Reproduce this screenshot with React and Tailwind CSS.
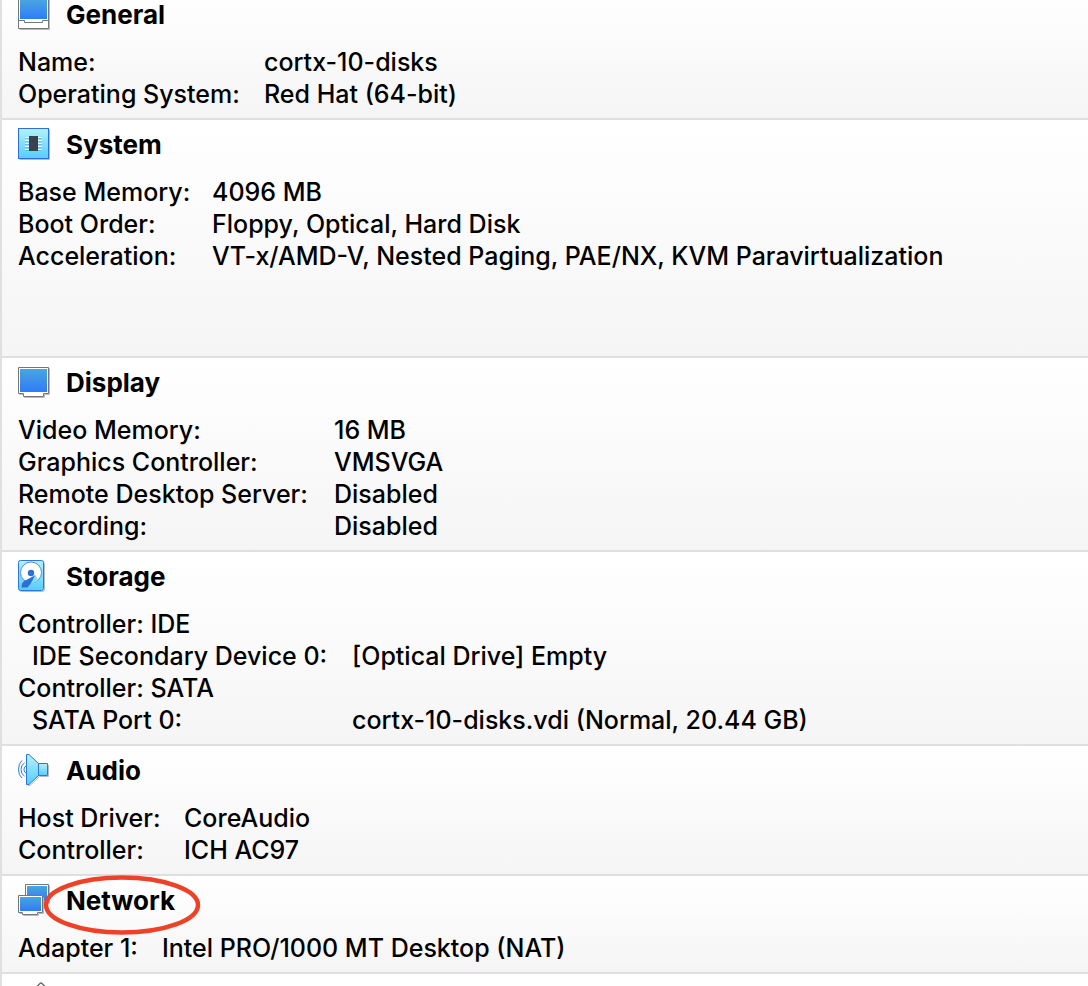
import React from "react";

function Gradients({ id, kind }) {
  const stops = kind === "screen" ? ["#49a5df", "#2f7bfa"] : ["#b2f2fb", "#58ccfd"];
  return (
    <defs>
      <linearGradient id={id} x1="0" y1="0" x2="0" y2="1">
        <stop offset="0" stopColor={stops[0]} />
        <stop offset="1" stopColor={stops[1]} />
      </linearGradient>
    </defs>
  );
}

function Icon({ children }) {
  return (
    <svg viewBox="0 0 32 32" className="h-8 w-8 shrink-0" fill="none" aria-hidden="true">
      {children}
    </svg>
  );
}

function GeneralIcon() {
  return (
    <Icon>
      <Gradients id="general" kind="screen" />
      <path d="M1.5 31.5H31.5V1.5" stroke="#b9b9b9" />
      <path d="M.5 .5H30.5V30.5H.5Z" fill="#fff" stroke="#777" />
      <rect x="2" y="2" width="27" height="19" fill="url(#general)" />
      <path d="M.5 22.5H6.5V24.5H24.5V22.5H30.5" stroke="#777" />
    </Icon>
  );
}

function SystemIcon() {
  return (
    <Icon>
      <Gradients id="system" kind="aqua" />
      <path d="M1.5 31.5H31.5V1.5" stroke="#b9b9c4" />
      <rect x=".5" y=".5" width="30" height="30" fill="url(#system)" stroke="#2b70d9" />
      <path d="M7 9.5H24M7 12.5H24M7 15.5H24M7 18.5H24M7 21.5H24" stroke="#fff" />
      <path d="M7 10.5H24M7 13.5H24M7 16.5H24M7 19.5H24M7 22.5H24" stroke="#5fa9cf" strokeWidth=".6" />
      <rect x="11" y="8" width="9" height="15" fill="#3a424e" />
    </Icon>
  );
}

function DisplayIcon() {
  return (
    <Icon>
      <Gradients id="display" kind="screen" />
      <path d="M1.5 28.5H6.5V31.5H26.5V28.5H31.5V2.5" stroke="#b9b9b9" />
      <path d="M.5 1.5H30.5V27.5H25.5V30.5H5.5V27.5H.5Z" fill="#fff" stroke="#777" />
      <rect x="2" y="3" width="27" height="23" fill="url(#display)" />
    </Icon>
  );
}

function StorageIcon() {
  return (
    <Icon>
      <Gradients id="storage" kind="aqua" />
      <rect x="1.5" y="1.5" width="25" height="30" rx="2" stroke="#b9b9c4" />
      <rect x=".5" y=".5" width="25" height="30" rx="2" fill="url(#storage)" stroke="#2879dc" />
      <circle cx="13" cy="12.5" r="10.5" fill="#fff" stroke="#2879dc" strokeWidth=".8" />
      <path d="M17.5 15L5.5 21.5Q3 24 3.5 27.5H9.5L14.5 21.5Z" fill="#2b70d9" />
      <path d="M17.5 15L12.5 24Q18 22.5 20 20Z" fill="#87dff9" />
      <circle cx="13" cy="13" r="3.2" fill="#2b70d9" />
    </Icon>
  );
}

function AudioIcon() {
  return (
    <Icon>
      <Gradients id="audio" kind="aqua" />
      <path d="M10 31.5L12 31.5L21.5 22.5H30.5V11" stroke="#b9b9c4" />
      <path d="M8.5 .5H11L20.5 9.5V21.5L11 30.5H8.5Z" fill="url(#audio)" stroke="#2879dc" />
      <path d="M20.5 9.5H29.5V21.5H20.5Z" fill="url(#audio)" stroke="#2879dc" />
      <path d="M8 12Q6 12.5 6 15.5T8 19M6.5 9Q3 10.5 3 15.5T6.5 22M4 6.5Q.5 9.5 .5 15.5T4 24" stroke="#2879dc" />
    </Icon>
  );
}

function NetworkIcon() {
  return (
    <Icon>
      <Gradients id="network" kind="screen" />
      <path d="M8.5 19.5H31.5V1.5" stroke="#b9b9b9" />
      <path d="M7.5 .5H30.5V18.5H7.5Z" fill="#fff" stroke="#777" />
      <rect x="9" y="2" width="20" height="15" fill="url(#network)" />
      <path d="M1.5 29.5H5.5V31.5H20.5V29.5H25.5V13.5" stroke="#b9b9b9" />
      <path d="M.5 11.5H24.5V28.5H19.5V30.5H4.5V28.5H.5Z" fill="#fff" stroke="#777" />
      <rect x="2" y="13" width="21" height="14" fill="url(#network)" />
    </Icon>
  );
}

function UsbIcon() {
  return (
    <Icon>
      <path d="M18.5 5L22 1.5Q23 .5 24 1.5L27.5 5L12 29L6 24Z" fill="#fff" stroke="#666" strokeWidth="1.3" />
    </Icon>
  );
}

const sections = [
  {
    title: "General",
    icon: GeneralIcon,
    columns: "grid-cols-[246px_1fr]",
    rows: [
      ["Name:", "cortx-10-disks"],
      ["Operating System:", "Red Hat (64-bit)"],
    ],
  },
  {
    title: "System",
    icon: SystemIcon,
    columns: "grid-cols-[194px_1fr]",
    spacious: true,
    rows: [
      ["Base Memory:", "4096 MB"],
      ["Boot Order:", "Floppy, Optical, Hard Disk"],
      ["Acceleration:", "VT-x/AMD-V, Nested Paging, PAE/NX, KVM Paravirtualization"],
    ],
  },
  {
    title: "Display",
    icon: DisplayIcon,
    columns: "grid-cols-[316px_1fr]",
    rows: [
      ["Video Memory:", "16 MB"],
      ["Graphics Controller:", "VMSVGA"],
      ["Remote Desktop Server:", "Disabled"],
      ["Recording:", "Disabled"],
    ],
  },
  {
    title: "Storage",
    icon: StorageIcon,
    columns: "grid-cols-[334px_1fr]",
    rows: [
      ["Controller: IDE", ""],
      ["IDE Secondary Device 0:", "[Optical Drive] Empty", true],
      ["Controller: SATA", ""],
      ["SATA Port 0:", "cortx-10-disks.vdi (Normal, 20.44 GB)", true],
    ],
  },
  {
    title: "Audio",
    icon: AudioIcon,
    columns: "grid-cols-[166px_1fr]",
    rows: [
      ["Host Driver:", "CoreAudio"],
      ["Controller:", "ICH AC97"],
    ],
  },
  {
    title: "Network",
    icon: NetworkIcon,
    columns: "grid-cols-[144px_1fr]",
    circled: true,
    rows: [["Adapter 1:", "Intel PRO/1000 MT Desktop (NAT)"]],
  },
];

function Section({ title, icon: SectionIcon, columns, rows, spacious, circled }) {
  return (
    <section
      className={`border-b-2 border-[#dfdfdf] bg-linear-to-b from-white to-[#f5f5f5] px-4 pt-2 ${spacious ? "pb-[84px]" : "pb-2"}`}
    >
      <header className="relative flex h-8 items-center gap-4">
        <SectionIcon />
        <h2 className="pt-0.5 text-[26px] leading-7 font-bold">{title}</h2>
        {circled && (
          <svg
            viewBox="0 0 158 62"
            className="absolute -top-[10px] left-[25px] h-[62px] w-[158px]"
            fill="none"
            aria-hidden="true"
          >
            <ellipse cx="79" cy="31" rx="76" ry="27.5" stroke="#ee4228" strokeWidth="4.5" />
          </svg>
        )}
      </header>
      <dl className={`mt-4 grid text-[25px] leading-8 font-medium whitespace-nowrap ${columns}`}>
        {rows.map(([label, value, nested]) => (
          <React.Fragment key={label}>
            <dt className={nested ? "pl-3.5" : ""}>{label}</dt>
            <dd>{value}</dd>
          </React.Fragment>
        ))}
      </dl>
    </section>
  );
}

export default function App() {
  return (
    <main className="h-screen overflow-hidden border-l-2 border-[#e0e0e0] bg-white font-['Inter',sans-serif] text-black">
      <div className="-mt-2.5">
        {sections.map((section) => (
          <Section key={section.title} {...section} />
        ))}
        <section className="px-4 pt-2">
          <UsbIcon />
        </section>
      </div>
    </main>
  );
}
